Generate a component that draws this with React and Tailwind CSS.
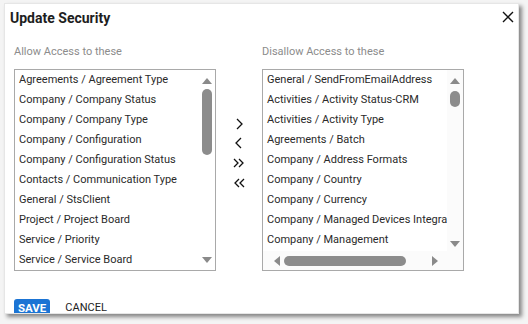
import React from 'react';

const allowed = [
  'Agreements / Agreement Type',
  'Company / Company Status',
  'Company / Company Type',
  'Company / Configuration',
  'Company / Configuration Status',
  'Contacts / Communication Type',
  'General / StsClient',
  'Project / Project Board',
  'Service / Priority',
  'Service / Service Board',
];

const disallowed = [
  'General / SendFromEmailAddress',
  'Activities / Activity Status-CRM',
  'Activities / Activity Type',
  'Agreements / Batch',
  'Company / Address Formats',
  'Company / Country',
  'Company / Currency',
  'Company / Managed Devices Integration',
  'Company / Management',
];

const Tri = ({ dir }) => {
  const pts = {
    up: '0,7 5,1 10,7',
    down: '0,1 5,7 10,1',
    left: '7,0 1,5 7,10',
    right: '1,0 7,5 1,10',
  }[dir];
  const box = dir === 'up' || dir === 'down' ? '0 0 10 8' : '0 0 8 10';
  const cls = dir === 'up' || dir === 'down' ? 'w-[10px] h-[8px]' : 'w-[8px] h-[10px]';
  return (
    <svg viewBox={box} className={cls}>
      <polygon points={pts} fill="#8a8a8a" />
    </svg>
  );
};

function Row({ text }) {
  return (
    <div className="h-5 leading-5 pl-[4px] whitespace-nowrap text-[11px] text-[#2a2a2a]">{text}</div>
  );
}

export default function App() {
  return (
    <div className="w-[528px] h-[324px] bg-[#f4f4f4] overflow-hidden" style={{ fontFamily: 'Roboto, "Liberation Sans", sans-serif' }}>
      <div className="ml-[4px] mt-[3px] w-[515px] h-[311px] bg-white border border-[#e6e6e6] shadow-[3px_3px_4px_rgba(0,0,0,0.45)] overflow-hidden relative">
        <div className="flex items-start justify-between pl-[5px] pr-[4px] pt-[4px]">
          <h1 className="text-[14px] font-bold text-[#1e1e1e] leading-5">Update Security</h1>
          <svg viewBox="0 0 12 12" className="w-[12px] h-[12px] mt-[3px]">
            <path d="M1 1 L11 11 M11 1 L1 11" stroke="#111" strokeWidth="1.4" />
          </svg>
        </div>

        <div className="flex pl-[9px] mt-[16px]">
          {/* left */}
          <div className="w-[202px]">
            <div className="text-[11px] text-[#8c8c8c] leading-4 h-4">Allow Access to these</div>
            <div className="mt-[9px] h-[202px] border border-[#a9a9a9] flex">
              <div className="flex-1 overflow-hidden">
                {allowed.map((t) => (
                  <Row key={t} text={t} />
                ))}
              </div>
              <div className="w-[16px] flex flex-col items-center pt-[7px] pb-[6px]">
                <Tri dir="up" />
                <div className="mt-[4px] w-[10px] h-[66px] rounded-full bg-[#8c8c8c]" />
                <div className="flex-1" />
                <Tri dir="down" />
              </div>
            </div>
          </div>

          {/* buttons */}
          <div className="w-[46px] flex flex-col items-center pt-[71px] text-[#111]">
            <svg viewBox="0 0 10 12" className="w-[10px] h-[12px] mt-[3px]">
              <path d="M3 1 L8 6 L3 11" stroke="#111" strokeWidth="1.3" fill="none" />
            </svg>
            <svg viewBox="0 0 10 12" className="w-[10px] h-[12px] mt-[7px]">
              <path d="M7 1 L2 6 L7 11" stroke="#111" strokeWidth="1.3" fill="none" />
            </svg>
            <svg viewBox="0 0 12 10" className="w-[12px] h-[10px] mt-[9px]">
              <path d="M1 1 L5 5 L1 9 M6 1 L10 5 L6 9" stroke="#111" strokeWidth="1.3" fill="none" />
            </svg>
            <svg viewBox="0 0 12 10" className="w-[12px] h-[10px] mt-[10px]">
              <path d="M6 1 L2 5 L6 9 M11 1 L7 5 L11 9" stroke="#111" strokeWidth="1.3" fill="none" />
            </svg>
          </div>

          {/* right */}
          <div className="w-[202px]">
            <div className="text-[11px] text-[#8c8c8c] leading-4 h-4">Disallow Access to these</div>
            <div className="mt-[9px] h-[202px] border border-[#a9a9a9] flex flex-col">
              <div className="flex flex-1 min-h-0">
                <div className="flex-1 overflow-hidden">
                  {disallowed.map((t) => (
                    <Row key={t} text={t} />
                  ))}
                </div>
                <div className="w-[16px] flex flex-col items-center pt-[7px] pb-[3px] bg-[#fbfbfb]">
                  <Tri dir="up" />
                  <div className="mt-[6px] w-[10px] h-[16px] rounded-full bg-[#8c8c8c]" />
                  <div className="flex-1" />
                  <Tri dir="down" />
                </div>
              </div>
              <div className="h-[19px] flex items-center pl-[10px] pr-[24px] bg-[#fbfbfb]">
                <Tri dir="left" />
                <div className="ml-[3px] w-[122px] h-[10px] rounded-full bg-[#8c8c8c]" />
                <div className="flex-1" />
                <Tri dir="right" />
              </div>
            </div>
          </div>
        </div>

        <div className="flex items-center pl-[9px] mt-[28px]">
          <button className="h-[18px] px-[4px] rounded-[3px] bg-[#1b74d4] text-white text-[11.5px] font-bold leading-[18px]">SAVE</button>
          <button className="ml-[15px] text-[11px] text-[#222] leading-[18px]">CANCEL</button>
        </div>
      </div>
    </div>
  );
}
